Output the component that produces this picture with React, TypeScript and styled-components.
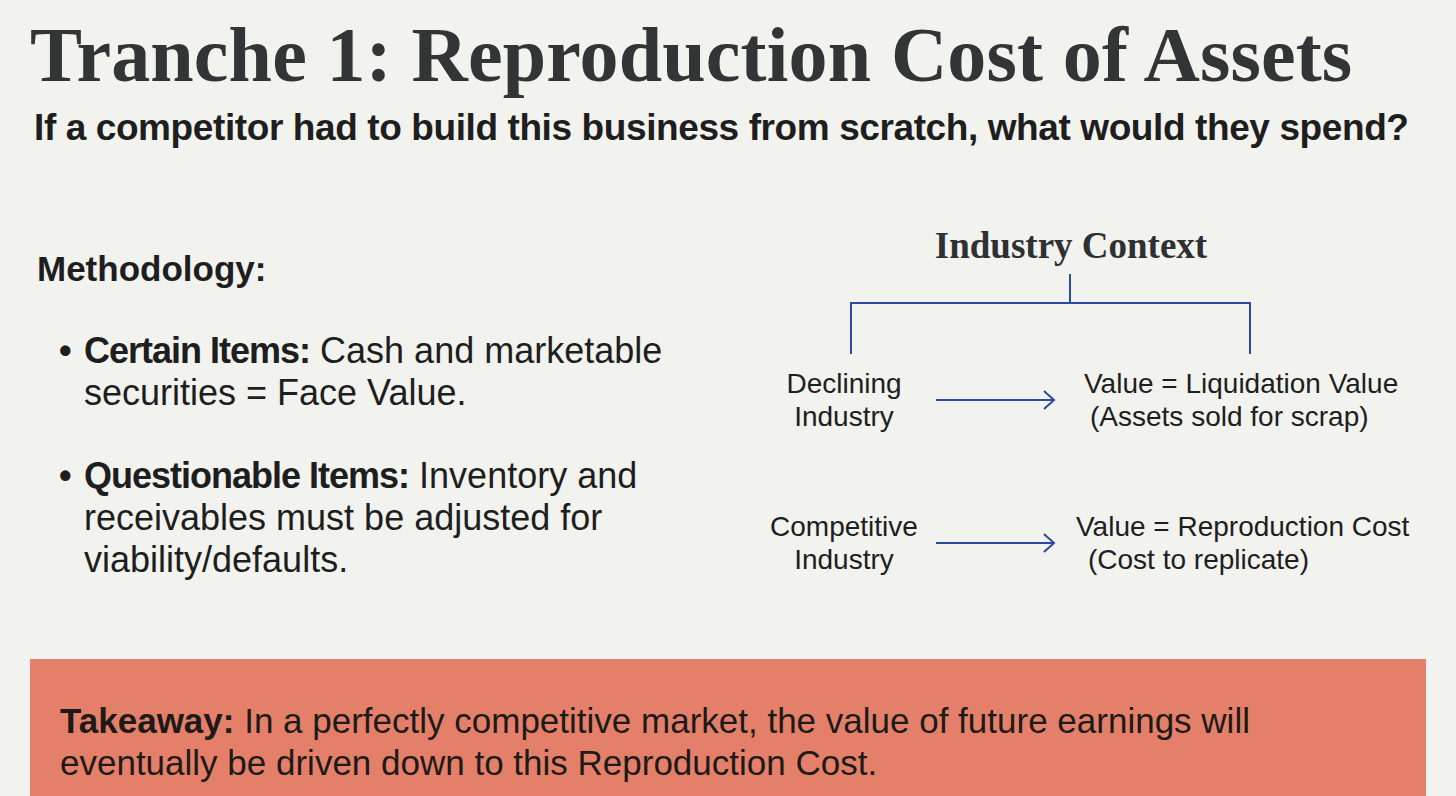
import React from 'react'
import styled, { createGlobalStyle } from 'styled-components'

const GlobalStyle = createGlobalStyle`
  html, body {
    margin: 0;
    padding: 0;
    background: #f2f2ee;
  }
  body {
    font-family: 'Liberation Sans', Arial, sans-serif;
    color: #202020;
  }
`

const BLUE = '#2c4a9e'

const Page = styled.div`
  width: 1456px;
  height: 796px;
  box-sizing: border-box;
  padding: 0 30px;
  display: flex;
  flex-direction: column;
  overflow: hidden;
`

const Header = styled.header`
  padding-top: 16px;
`

const Title = styled.h1`
  margin: 0;
  font-family: 'Liberation Serif', 'Times New Roman', serif;
  font-weight: 700;
  font-size: 78px;
  line-height: 1;
  color: #323436;
  letter-spacing: 0.15px;
`

const Subtitle = styled.h2`
  margin: 12px 0 0 4px;
  font-size: 37px;
  line-height: 1.2;
  font-weight: 700;
  color: #1e1e1e;
  letter-spacing: -0.4px;
`

const Main = styled.main`
  display: grid;
  grid-template-columns: 734px 1fr;
  margin-top: 62px;
`

const LeftColumn = styled.section`
  padding-left: 7px;
  padding-top: 36px;
`

const SectionLabel = styled.div`
  font-size: 35px;
  font-weight: 700;
  line-height: 1.2;
  color: #1e1e1e;
`

const BulletList = styled.ul`
  list-style: none;
  margin: 40px 0 0;
  padding: 0 0 0 22px;
  display: flex;
  flex-direction: column;
  gap: 41px;
`

const BulletItem = styled.li`
  display: grid;
  grid-template-columns: 25px 590px;
  font-size: 36px;
  line-height: 42px;
  color: #1e1e1e;

  &::before {
    content: '•';
    font-weight: 700;
  }

  strong {
    font-weight: 700;
    letter-spacing: -1px;
  }
`

const Diagram = styled.section`
  display: flex;
  flex-direction: column;
  padding-top: 12px;
`

const DiagramTitle = styled.div`
  width: 614px;
  text-align: center;
  font-family: 'Liberation Serif', 'Times New Roman', serif;
  font-weight: 700;
  font-size: 37px;
  line-height: 44px;
  color: #2e3032;
`

const Bracket = styled.svg`
  display: block;
  margin: 6px 0 0 86px;
`

const FlowRow = styled.div<{ $gap: number }>`
  display: grid;
  grid-template-columns: 160px 152px auto;
  align-items: center;
  margin-top: ${({ $gap }) => $gap}px;
`

const FlowLabel = styled.div`
  text-align: center;
  font-size: 28px;
  line-height: 33px;
  color: #1e1e1e;
`

const Arrow = styled.svg`
  display: block;
  margin-left: 12px;
`

const FlowValue = styled.div<{ $indent: number }>`
  padding-left: ${({ $indent }) => $indent}px;
  font-size: 28px;
  line-height: 33px;
  color: #1e1e1e;
  white-space: nowrap;
`

const Note = styled.span<{ $indent: number }>`
  display: block;
  padding-left: ${({ $indent }) => $indent}px;
`

const Takeaway = styled.footer`
  margin-top: auto;
  height: 137px;
  box-sizing: border-box;
  background: #e4806a;
  padding: 41px 30px 0;
  font-size: 35px;
  line-height: 42px;
  color: #1d1a18;

  strong {
    font-weight: 700;
  }
`

const ArrowIcon = () => (
  <Arrow width="122" height="24" viewBox="0 0 122 24">
    <path d="M0 12 H118" stroke={BLUE} strokeWidth="2" fill="none" />
    <path d="M108 3 L118 12 L108 21" stroke={BLUE} strokeWidth="2" fill="none" />
  </Arrow>
)

const flows = [
  {
    label: ['Declining', 'Industry'],
    value: 'Value = Liquidation Value',
    note: '(Assets sold for scrap)',
    indent: 8,
    noteIndent: 6,
    gap: 11,
  },
  {
    label: ['Competitive', 'Industry'],
    value: 'Value = Reproduction Cost',
    note: '(Cost to replicate)',
    indent: 0,
    noteIndent: 12,
    gap: 77,
  },
]

const App = () => {
  return (
    <>
      <GlobalStyle />
      <Page>
        <Header>
          <Title>Tranche 1: Reproduction Cost of Assets</Title>
          <Subtitle>If a competitor had to build this business from scratch, what would they spend?</Subtitle>
        </Header>

        <Main>
          <LeftColumn>
            <SectionLabel>Methodology:</SectionLabel>
            <BulletList>
              <BulletItem>
                <span>
                  <strong>Certain Items:</strong> Cash and marketable securities = Face Value.
                </span>
              </BulletItem>
              <BulletItem>
                <span>
                  <strong>Questionable Items:</strong> Inventory and receivables must be adjusted for
                  viability/defaults.
                </span>
              </BulletItem>
            </BulletList>
          </LeftColumn>

          <Diagram>
            <DiagramTitle>Industry Context</DiagramTitle>
            <Bracket width="402" height="82" viewBox="0 0 402 82">
              <path d="M220 0 V29" stroke={BLUE} strokeWidth="2" fill="none" />
              <path d="M1 80 V29 H400 V80" stroke={BLUE} strokeWidth="2" fill="none" />
            </Bracket>
            {flows.map((f) => (
              <FlowRow key={f.value} $gap={f.gap}>
                <FlowLabel>
                  {f.label[0]}
                  <br />
                  {f.label[1]}
                </FlowLabel>
                <ArrowIcon />
                <FlowValue $indent={f.indent}>
                  {f.value}
                  <Note $indent={f.noteIndent}>{f.note}</Note>
                </FlowValue>
              </FlowRow>
            ))}
          </Diagram>
        </Main>

        <Takeaway>
          <strong>Takeaway:</strong> In a perfectly competitive market, the value of future earnings will
          <br />
          eventually be driven down to this Reproduction Cost.
        </Takeaway>
      </Page>
    </>
  )
}

export default App
